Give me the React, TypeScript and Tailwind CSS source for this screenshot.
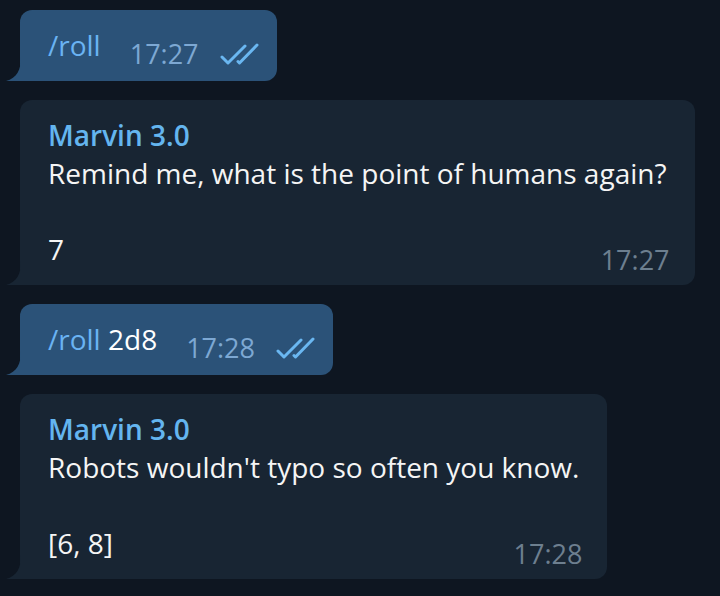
import React from "react";

function Tail({ color }: { color: string }) {
  return (
    <svg
      className="absolute bottom-0 left-[-14px]"
      width="15"
      height="24"
      viewBox="0 0 15 24"
    >
      <path d="M15 0 C15 13 11 21 0 24 L15 24 Z" fill={color} />
    </svg>
  );
}

function DoubleCheck() {
  return (
    <svg
      width="40"
      height="22"
      viewBox="0 0 40 22"
      fill="none"
      stroke="#6ab7f1"
      strokeWidth="3"
      strokeLinecap="round"
      strokeLinejoin="round"
      className="mb-[1px]"
    >
      <path d="M3 14 L9 20 L26 3" />
      <path d="M19 18.5 L20.5 20 L38 2" />
    </svg>
  );
}

function OutMessage({ cmd, rest, time }: { cmd: string; rest?: string; time: string }) {
  return (
    <div className="relative flex w-fit items-end rounded-[12px] rounded-bl-none bg-[#2b5278] pl-[28px] pr-[18px] pt-[16px] pb-[17px]">
      <Tail color="#2b5278" />
      <div className="text-[28px] leading-[38px]">
        <span className="text-[#6ab3f3]">{cmd}</span>
        {rest && <span className="text-white"> {rest}</span>}
      </div>
      <div className="ml-[29px] mb-[-3px] flex items-center gap-[20px]">
        <span className="text-[27px] leading-[26px] text-[#7da8d3]">{time}</span>
        <DoubleCheck />
      </div>
    </div>
  );
}

function InMessage({ text, result, time }: { text: string; result: string; time: string }) {
  return (
    <div className="relative w-fit rounded-[12px] rounded-bl-none bg-[#182533] pl-[28px] pr-[25px] pt-[16px] pb-[17px]">
      <Tail color="#182533" />
      <div className="text-[28px] font-semibold leading-[38px] text-[#64b5ef]">Marvin 3.0</div>
      <div className="pr-[3px] text-[28px] leading-[38px] text-[#f5f5f5]">{text}</div>
      <div className="h-[38px]" />
      <div className="flex items-end justify-between">
        <span className="text-[28px] leading-[38px] text-[#f5f5f5]">{result}</span>
        <span className="mb-[-5px] text-[27px] leading-[26px] text-[#6d7f8f]">{time}</span>
      </div>
    </div>
  );
}

export default function App() {
  return (
    <div className="min-h-screen bg-[#0e1621] pl-[20px] pt-[10px] font-['Open_Sans',sans-serif]">
      <div className="flex flex-col gap-[19px]">
        <OutMessage cmd="/roll" time="17:27" />
        <InMessage text="Remind me, what is the point of humans again?" result="7" time="17:27" />
        <OutMessage cmd="/roll" rest="2d8" time="17:28" />
        <InMessage text="Robots wouldn't typo so often you know." result="[6, 8]" time="17:28" />
      </div>
    </div>
  );
}
